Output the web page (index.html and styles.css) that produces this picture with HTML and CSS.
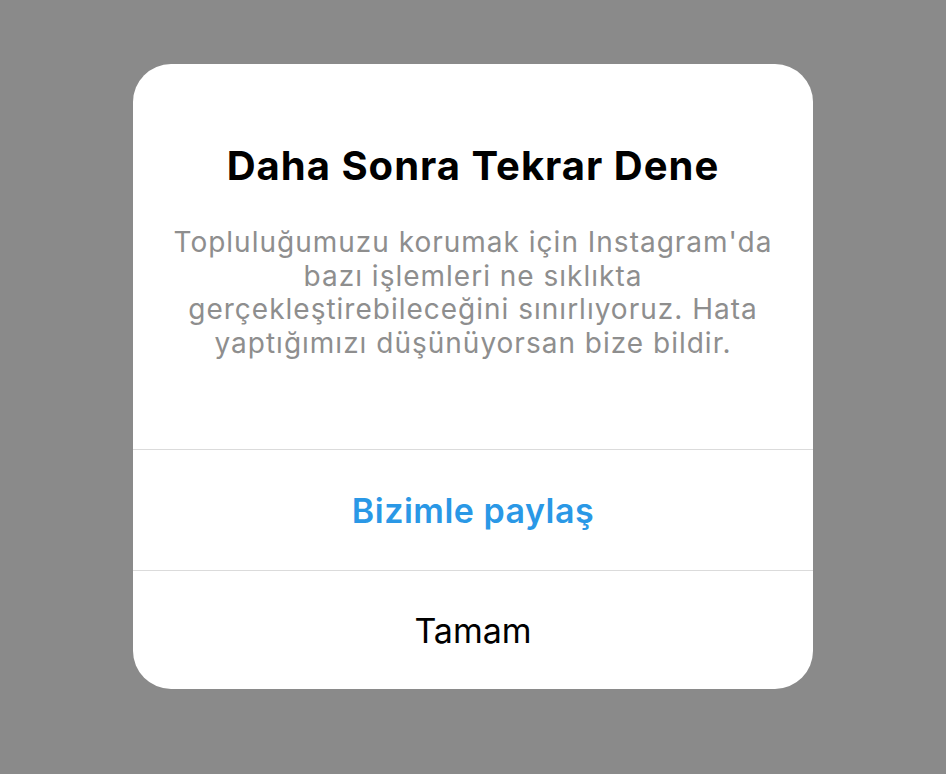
FILE: index.html
```html
<!DOCTYPE html>
<html lang="tr">
<head>
<meta charset="utf-8">
<title>Daha Sonra Tekrar Dene</title>
<link rel="stylesheet" href="styles.css">
</head>
<body>
<div class="overlay">
  <div class="dialog" role="alertdialog">
    <div class="dialog-body">
      <h1 class="dialog-title">Daha Sonra Tekrar Dene</h1>
      <p class="dialog-text">Topluluğumuzu korumak için Instagram'da bazı işlemleri ne sıklıkta gerçekleştirebileceğini sınırlıyoruz. Hata yaptığımızı düşünüyorsan bize bildir.</p>
    </div>
    <button class="dialog-action action-primary">Bizimle paylaş</button>
    <button class="dialog-action">Tamam</button>
  </div>
</div>
</body>
</html>
```
FILE: styles.css
```css
* { box-sizing: border-box; }

html, body {
  margin: 0;
  height: 100%;
}

body {
  background: #8a8a8a;
  font-family: Inter, "Noto Sans", "Liberation Sans", sans-serif;
}

.overlay {
  display: flex;
  justify-content: center;
  padding-top: 64px;
}

.dialog {
  width: 680px;
  background: #fff;
  border-radius: 38px;
  display: flex;
  flex-direction: column;
  overflow: hidden;
}

.dialog-body {
  height: 385px;
  padding: 78px 26px 0;
  text-align: center;
}

.dialog-title {
  margin: 0;
  font-size: 40px;
  line-height: 48px;
  font-weight: 700;
  color: #000;
  letter-spacing: 1px;
}

.dialog-text {
  margin: 36px 0 0;
  font-size: 28px;
  line-height: 33.5px;
  color: #8e8e8e;
  letter-spacing: 1px;
}

.dialog-action {
  border: 0;
  border-top: 1.5px solid #dbdbdb;
  background: transparent;
  font-family: inherit;
  font-size: 34px;
  color: #000;
  height: 119px;
  padding: 0;
  cursor: pointer;
}

.action-primary {
  height: 121px;
  color: #2a98e6;
  font-weight: 600;
  letter-spacing: 0.5px;
}
```
